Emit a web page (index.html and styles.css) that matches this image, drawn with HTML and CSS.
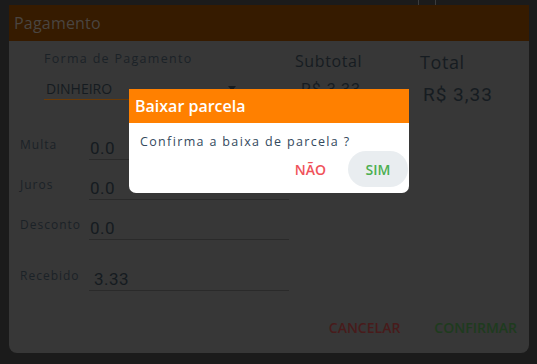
FILE: index.html
```html
<!DOCTYPE html>
<html lang="pt">
<head>
<meta charset="utf-8">
<title>Pagamento</title>
<link rel="stylesheet" href="styles.css">
</head>
<body>
<div class="topstrip"><span class="tick"></span><span class="tick"></span></div>
<section class="card">
  <header class="card-header">Pagamento</header>
  <div class="card-body">
    <div class="summary">
      <div class="col col-forma">
        <div class="lbl-forma">Forma de Pagamento</div>
        <div class="select">
          <span class="select-value">DINHEIRO</span>
          <span class="select-arrow"></span>
        </div>
      </div>
      <div class="col col-sub">
        <div class="lbl-sub">Subtotal</div>
        <div class="val-sub">R$ 3,33</div>
      </div>
      <div class="col col-total">
        <div class="lbl-total">Total</div>
        <div class="val-total">R$ 3,33</div>
      </div>
    </div>
    <div class="fields">
      <div class="field"><span class="field-lbl">Multa</span><span class="field-input">0.0</span></div>
      <div class="field"><span class="field-lbl">Juros</span><span class="field-input">0.0</span></div>
      <div class="field"><span class="field-lbl">Desconto</span><span class="field-input">0.0</span></div>
      <div class="field field-recebido"><span class="field-lbl">Recebido</span><span class="field-input">3.33</span></div>
    </div>
    <div class="actions">
      <span class="btn btn-cancel">CANCELAR</span>
      <span class="btn btn-confirm">CONFIRMAR</span>
    </div>
  </div>
</section>

<div class="modal">
  <div class="modal-header">Baixar parcela</div>
  <div class="modal-body">
    <p class="modal-msg">Confirma a baixa de parcela ?</p>
    <div class="modal-actions">
      <span class="mbtn mbtn-no">NÃO</span>
      <span class="mbtn mbtn-yes">SIM</span>
    </div>
  </div>
</div>
</body>
</html>
```
FILE: styles.css
```css
* { box-sizing: border-box; }
html, body { margin: 0; padding: 0; }
body {
  width: 537px;
  height: 364px;
  background: #1b1b1b;
  font-family: "Open Sans", "Noto Sans", sans-serif;
  position: relative;
  overflow: hidden;
}
.topstrip {
  height: 5px;
  display: flex;
  gap: 16px;
  padding-left: 418px;
}
.tick { width: 1px; height: 5px; background: #3c3c3c; }

.card {
  margin-left: 9px;
  width: 520px;
  height: 348px;
  background: #373737;
  border-radius: 0 0 8px 8px;
  display: flex;
  flex-direction: column;
}
.card-header {
  height: 36px;
  background: #361b00;
  color: #4a4541;
  font-size: 16px;
  font-weight: 500;
  padding-left: 5px;
  display: flex;
  align-items: center;
  letter-spacing: 0.2px;
}
.card-body { flex: 1; display: flex; flex-direction: column; }

.summary {
  display: grid;
  grid-template-columns: 251px 125px 1fr;
  padding-left: 35px;
  padding-top: 9px;
}
.lbl-forma {
  font-size: 12.5px;
  letter-spacing: 1.3px;
  color: #1b2227;
  line-height: 18px;
}
.select {
  margin-top: 10px;
  width: 196px;
  border-bottom: 1px solid #6b3a05;
  display: flex;
  align-items: center;
  justify-content: space-between;
  height: 22px;
  padding-left: 2px;
  padding-right: 4px;
}
.select-value { font-size: 14px; color: #151b20; }
.select-arrow {
  width: 0; height: 0;
  border-left: 4px solid transparent;
  border-right: 4px solid transparent;
  border-top: 5px solid #151b20;
}
.lbl-sub {
  font-size: 16px;
  font-weight: 500;
  letter-spacing: 0.6px;
  color: #161c21;
  line-height: 22px;
}
.val-sub {
  margin-top: 8px;
  padding-left: 6px;
  font-family: "Roboto", "Liberation Sans", sans-serif;
  font-size: 16px;
  color: #161c21;
  letter-spacing: 1px;
}
.lbl-total {
  font-size: 18px;
  font-weight: 500;
  letter-spacing: 0.6px;
  color: #161c21;
  line-height: 24px;
}
.val-total {
  margin-top: 9px;
  padding-left: 3px;
  font-family: "Roboto", "Liberation Sans", sans-serif;
  font-size: 19px;
  color: #161c21;
  letter-spacing: 1px;
}

.fields {
  padding-left: 11px;
  padding-top: 30px;
  display: flex;
  flex-direction: column;
  gap: 16px;
}
.field {
  display: grid;
  grid-template-columns: 69px 200px;
  align-items: end;
  height: 24px;
}
.field-recebido { margin-top: 11px; }
.field-lbl {
  font-size: 12px;
  letter-spacing: 1px;
  color: #1b2227;
  padding-bottom: 7px;
  white-space: nowrap;
}
.field-input {
  font-family: "Roboto", "Liberation Sans", sans-serif;
  font-size: 17px;
  color: #151b20;
  border-bottom: 1px solid #2a2a2a;
  padding-left: 1px;
  line-height: 22px;
  letter-spacing: 0.5px;
}
.field-recebido .field-input { padding-left: 5px; }

.actions {
  margin-top: auto;
  display: flex;
  justify-content: flex-end;
  gap: 34px;
  padding-right: 12px;
  padding-bottom: 15px;
}
.btn {
  font-size: 14px;
  font-weight: 600;
  line-height: 20px;
}
.btn-cancel { color: #481b1b; }
.btn-confirm { color: #1e3b1e; }

.modal {
  position: absolute;
  left: 129px;
  top: 89px;
  width: 280px;
  background: #fff;
  border-radius: 0 0 7px 7px;
  overflow: hidden;
}
.modal-header {
  height: 34px;
  background: #ff8000;
  color: #fff;
  font-size: 16px;
  font-weight: 600;
  padding-left: 6px;
  display: flex;
  align-items: center;
}
.modal-body { padding: 10px 1px 6px 11px; }
.modal-msg {
  margin: 0;
  font-size: 12.5px;
  letter-spacing: 1.35px;
  color: #33495d;
  line-height: 18px;
}
.modal-actions {
  display: flex;
  justify-content: flex-end;
  align-items: center;
  gap: 22px;
}
.mbtn { font-size: 14px; font-weight: 600; }
.mbtn-no { color: #f0525a; }
.mbtn-yes {
  color: #4caf50;
  background: #e9edf0;
  width: 60px;
  height: 36px;
  border-radius: 18px;
  display: flex;
  align-items: center;
  justify-content: center;
}
```
